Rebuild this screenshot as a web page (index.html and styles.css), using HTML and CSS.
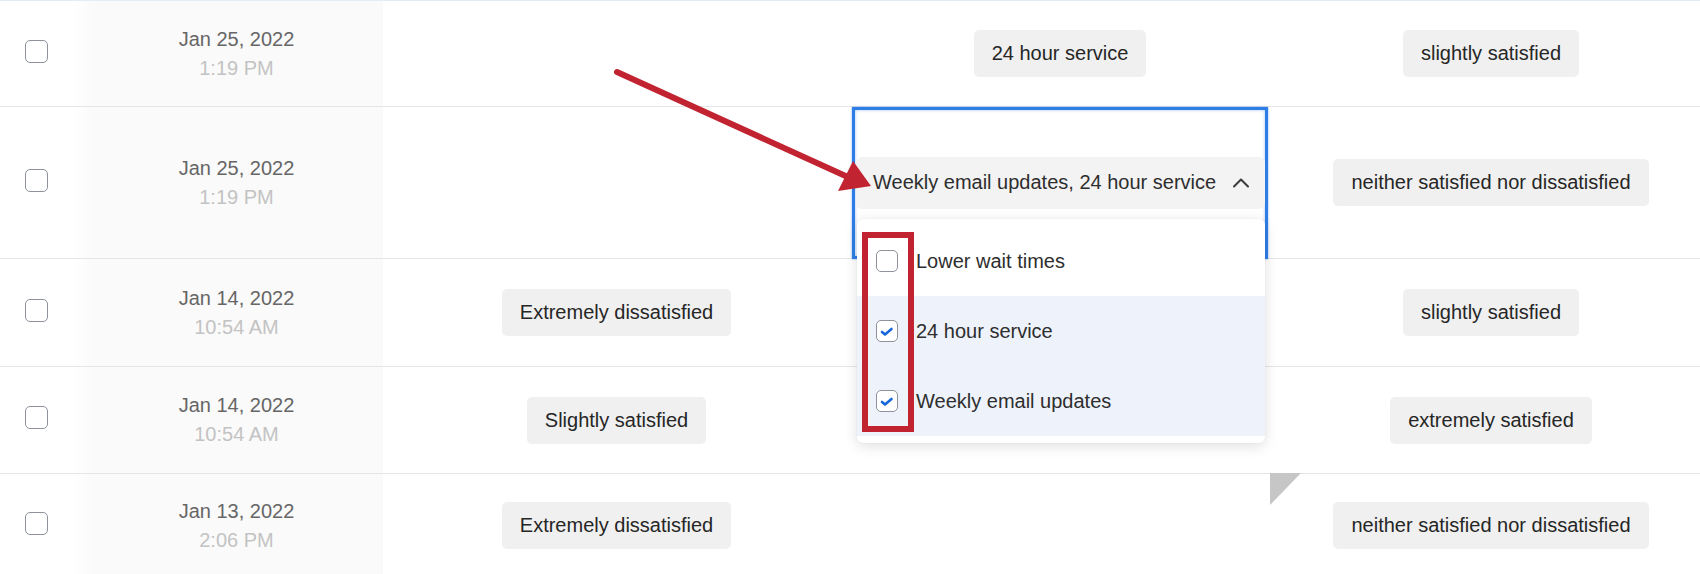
FILE: index.html
```html
<!DOCTYPE html>
<html lang="en">
<head>
<meta charset="utf-8">
<title>Responses</title>
<link rel="stylesheet" href="styles.css">
</head>
<body>
<div class="page">
  <div class="table">
    <div class="row row-1">
      <div class="cell sel"><span class="box"></span></div>
      <div class="cell date"><span class="d">Jan 25, 2022</span><span class="t">1:19 PM</span></div>
      <div class="cell"></div>
      <div class="cell"><span class="pill">24 hour service</span></div>
      <div class="cell"><span class="pill">slightly satisfied</span></div>
    </div>
    <div class="row row-2 editing">
      <div class="cell sel"><span class="box"></span></div>
      <div class="cell date"><span class="d">Jan 25, 2022</span><span class="t">1:19 PM</span></div>
      <div class="cell"></div>
      <div class="cell editor">
        <div class="select">
          <span>Weekly email updates, 24 hour service</span>
          <svg class="chev" width="16" height="10" viewBox="0 0 16 10"><path d="M1 8.5 L8 1.5 L15 8.5" fill="none" stroke="#3a3a3a" stroke-width="2" stroke-linecap="round" stroke-linejoin="round"/></svg>
        </div>
        <ul class="menu">
          <li class="opt"><span class="mbox"></span>Lower wait times</li>
          <li class="opt on"><span class="mbox"><svg width="22" height="22" viewBox="0 0 22 22"><path d="M6 12 L9 14.5 L15.5 9" fill="none" stroke="#1767d8" stroke-width="2.6" stroke-linecap="round" stroke-linejoin="round"/></svg></span>24 hour service</li>
          <li class="opt on"><span class="mbox"><svg width="22" height="22" viewBox="0 0 22 22"><path d="M6 12 L9 14.5 L15.5 9" fill="none" stroke="#1767d8" stroke-width="2.6" stroke-linecap="round" stroke-linejoin="round"/></svg></span>Weekly email updates</li>
        </ul>
      </div>
      <div class="cell"><span class="pill">neither satisfied nor dissatisfied</span></div>
    </div>
    <div class="row row-3">
      <div class="cell sel"><span class="box"></span></div>
      <div class="cell date"><span class="d">Jan 14, 2022</span><span class="t">10:54 AM</span></div>
      <div class="cell"><span class="pill">Extremely dissatisfied</span></div>
      <div class="cell"></div>
      <div class="cell"><span class="pill">slightly satisfied</span></div>
    </div>
    <div class="row row-4">
      <div class="cell sel"><span class="box"></span></div>
      <div class="cell date"><span class="d">Jan 14, 2022</span><span class="t">10:54 AM</span></div>
      <div class="cell"><span class="pill">Slightly satisfied</span></div>
      <div class="cell"></div>
      <div class="cell"><span class="pill">extremely satisfied</span></div>
    </div>
    <div class="row row-5">
      <div class="cell sel"><span class="box"></span></div>
      <div class="cell date"><span class="d">Jan 13, 2022</span><span class="t">2:06 PM</span></div>
      <div class="cell"><span class="pill">Extremely dissatisfied</span></div>
      <div class="cell"></div>
      <div class="cell"><span class="pill">neither satisfied nor dissatisfied</span></div>
    </div>
  </div>

  <span class="corner"></span>

  <svg class="callout" width="1700" height="574" viewBox="0 0 1700 574">
    <line x1="617" y1="72" x2="850" y2="178" stroke="#c22331" stroke-width="6" stroke-linecap="round"/>
    <polygon points="871,186 838,191 853,161" fill="#c22331"/>
    <rect x="865" y="235" width="46" height="194" fill="none" stroke="#c22331" stroke-width="6"/>
  </svg>
</div>
</body>
</html>
```

FILE: styles.css
```css
html, body {
  margin: 0;
  padding: 0;
  background: #fff;
}

body {
  width: 1700px;
  height: 574px;
  overflow: hidden;
  font-family: "Liberation Sans", Arial, sans-serif;
  font-size: 20px;
  color: #2e2e2e;
}

.page {
  position: relative;
  width: 1700px;
  height: 574px;
  overflow: hidden;
}

.table {
  width: 1712px;
  border-top: 1px solid #e6ecf5;
}

.row {
  display: grid;
  grid-template-columns: 90px 293px 467px 420px 442px;
  border-bottom: 1px solid #e6e6e6;
}

.row-1 { height: 105px; }
.row-2 { height: 151px; }
.row-3 { height: 107px; }
.row-4 { height: 106px; }
.row-5 { height: 103px; }

.cell {
  display: flex;
  align-items: center;
  justify-content: center;
}

.sel {
  justify-content: flex-start;
  padding-left: 25px;
  background: linear-gradient(90deg, rgba(0, 0, 0, 0) 72px, rgba(0, 0, 0, 0.015) 90px);
}

.box {
  box-sizing: border-box;
  width: 23px;
  height: 23px;
  margin-bottom: 5px;
  border: 1.5px solid #8d929b;
  border-radius: 5px;
  background: #fff;
}

.date {
  flex-direction: column;
  background: #fafafa;
  line-height: 29px;
  text-align: center;
}

.date .d { color: #666; }
.date .t { color: #c3c3c3; }

.pill {
  display: flex;
  align-items: center;
  height: 47px;
  padding: 0 18px;
  border-radius: 5px;
  background: #f0f0f0;
  color: #262626;
  white-space: nowrap;
}

/* cell in edit mode: focus ring, multi-select and its open option list */
.editing { position: relative; z-index: 3; }

.editor {
  position: relative;
  padding: 0 5px 0 6px;
}

.editor::before {
  content: "";
  position: absolute;
  top: 0;
  bottom: -1px;
  left: 2px;
  right: 2px;
  border: 3px solid #2f7ee6;
  box-shadow: 0 0 2px rgba(47, 126, 230, 0.6), inset 0 0 3px rgba(47, 126, 230, 0.5);
  z-index: 1;
}

.select {
  position: relative;
  z-index: 2;
  flex: 1;
  display: flex;
  align-items: center;
  justify-content: space-between;
  height: 52px;
  padding: 0 16px 0 17px;
  border-radius: 6px;
  background: #f3f3f3;
  color: #2e2e2e;
  white-space: nowrap;
}

.chev { display: block; }

.menu {
  position: absolute;
  z-index: 4;
  top: 112px;
  left: 7px;
  width: 408px;
  margin: 0;
  padding: 7px 0;
  list-style: none;
  background: #fff;
  border-radius: 6px;
  box-shadow: 0 3px 14px rgba(0, 0, 0, 0.13), 0 0 2px rgba(0, 0, 0, 0.06);
}

.opt {
  display: flex;
  align-items: center;
  height: 70px;
  padding-left: 19px;
  color: #2e2e2e;
}

.opt.on { background: #eef3fb; }

.mbox {
  box-sizing: border-box;
  flex: none;
  width: 22px;
  height: 22px;
  margin-right: 18px;
  border: 1.5px solid #8d929b;
  border-radius: 5px;
  background: #fff;
  position: relative;
}

.mbox svg {
  position: absolute;
  left: -1.5px;
  top: -1.5px;
}

/* little folded tab peeking out below the option list */
.corner {
  position: absolute;
  left: 1270px;
  top: 473px;
  width: 31px;
  height: 32px;
  background: #c6c6c6;
  clip-path: polygon(0 0, 100% 0, 0 100%);
}

.callout {
  position: absolute;
  left: 0;
  top: 0;
  z-index: 10;
  pointer-events: none;
}
```
